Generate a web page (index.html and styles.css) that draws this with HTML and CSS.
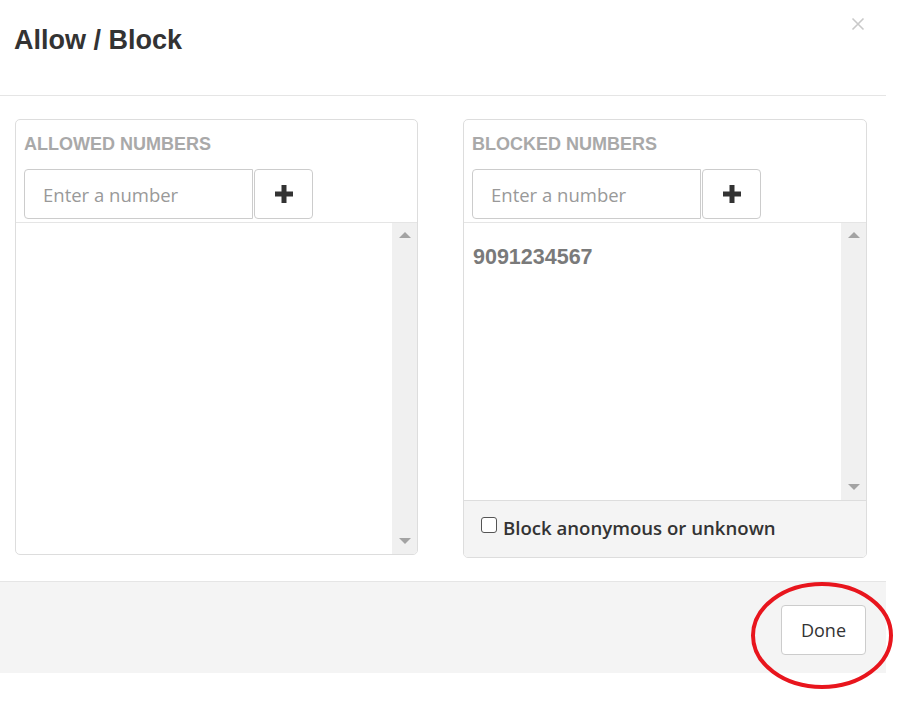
FILE: index.html
```html
<!DOCTYPE html>
<html>
<head>
<meta charset="utf-8">
<link rel="stylesheet" href="styles.css">
</head>
<body>
<div class="modal">
  <div class="modal-header">
    <h1 class="title">Allow / Block</h1>
    <button class="close" aria-label="Close">
      <svg width="14" height="14" viewBox="0 0 14 14"><path d="M1.5 1.5 L12.5 12.5 M12.5 1.5 L1.5 12.5" stroke="#c9c9c9" stroke-width="1.6" fill="none"/></svg>
    </button>
  </div>
  <div class="modal-body">
    <div class="panel panel-allow">
      <h2 class="panel-title">ALLOWED NUMBERS</h2>
      <div class="input-group">
        <input class="num-input" type="text" placeholder="Enter a number">
        <button class="add-btn"><svg width="18" height="18" viewBox="0 0 18 18"><path d="M6.5 0h5v6.5H18v5h-6.5V18h-5v-6.5H0v-5h6.5z" fill="#333"/></svg></button>
      </div>
      <div class="list list-allow">
        <div class="list-items"></div>
        <div class="scrollbar"><span class="arrow up"></span><span class="arrow down"></span></div>
      </div>
    </div>
    <div class="panel panel-block">
      <h2 class="panel-title">BLOCKED NUMBERS</h2>
      <div class="input-group">
        <input class="num-input" type="text" placeholder="Enter a number">
        <button class="add-btn"><svg width="18" height="18" viewBox="0 0 18 18"><path d="M6.5 0h5v6.5H18v5h-6.5V18h-5v-6.5H0v-5h6.5z" fill="#333"/></svg></button>
      </div>
      <div class="list list-block">
        <div class="list-items"><div class="item">9091234567</div></div>
        <div class="scrollbar"><span class="arrow up"></span><span class="arrow down"></span></div>
      </div>
      <label class="panel-footer"><span class="checkbox"></span>Block anonymous or unknown</label>
    </div>
  </div>
  <div class="modal-footer">
    <button class="done-btn">Done</button>
  </div>
</div>
<svg class="annotation" width="150" height="115" viewBox="0 0 150 115"><ellipse cx="75" cy="57.5" rx="69" ry="51.5" fill="none" stroke="#e8151d" stroke-width="4"/></svg>
</body>
</html>
```
FILE: styles.css
```css
* { box-sizing: border-box; }
html, body { margin: 0; padding: 0; background: #fff; }
body { width: 914px; height: 704px; position: relative; overflow: hidden; font-family: "Open Sans", sans-serif; color: #333; }

.modal { width: 886px; background: #fff; }

.modal-header {
  height: 96px;
  border-bottom: 1px solid #e5e5e5;
  display: flex;
  justify-content: space-between;
  align-items: flex-start;
  padding: 0 0 0 14px;
}
.title {
  margin: 25px 0 0 0;
  font-family: "Liberation Sans", Arial, sans-serif;
  font-weight: bold;
  font-size: 27px;
  line-height: 30px;
  color: #333;
}
.close {
  margin: 17px 21px 0 0;
  padding: 0;
  border: 0;
  background: none;
  width: 14px;
  height: 14px;
  display: flex;
}

.modal-body {
  display: grid;
  grid-template-columns: 403px 404px;
  column-gap: 45px;
  align-items: start;
  padding: 23px 20px 23px 15px;
}

.panel {
  border: 1px solid #ddd;
  border-radius: 5px;
  display: flex;
  flex-direction: column;
  overflow: hidden;
}
.panel-title {
  margin: 14px 0 0 8px;
  font-family: "Liberation Sans", Arial, sans-serif;
  font-weight: bold;
  font-size: 18px;
  line-height: 20px;
  color: #a9a9a9;
}
.input-group {
  display: flex;
  margin: 15px 0 0 8px;
  height: 50px;
}
.num-input {
  width: 229px;
  height: 50px;
  border: 1px solid #ccc;
  border-radius: 4px 0 0 4px;
  padding: 0 0 0 18px;
  font-family: "Open Sans", sans-serif;
  font-size: 18.5px;
  color: #555;
  outline: none;
  margin: 0;
}
.num-input::placeholder { color: #999; }
.add-btn {
  width: 59px;
  height: 50px;
  margin: 0 0 0 1px;
  border: 1px solid #ccc;
  border-radius: 4px;
  background: #fff;
  display: flex;
  align-items: center;
  justify-content: center;
  padding: 0;
}

.list {
  margin-top: 3px;
  border-top: 1px solid #e5e5e5;
  display: flex;
}
.list-allow { height: 332px; }
.list-block { height: 278px; }
.list-items { flex: 1; padding: 20px 9px; }
.item {
  font-family: "Liberation Sans", Arial, sans-serif;
  font-weight: bold;
  font-size: 21.5px;
  line-height: 28px;
  color: #7a7a7a;
}
.scrollbar {
  width: 25px;
  background: #f0f0f0;
  display: flex;
  flex-direction: column;
  justify-content: space-between;
  align-items: center;
  padding: 9px 0 10px;
}
.arrow {
  width: 0; height: 0;
  border-left: 6px solid transparent;
  border-right: 6px solid transparent;
}
.arrow.up { border-bottom: 6px solid #a3a3a3; }
.arrow.down { border-top: 6px solid #a3a3a3; }

.panel-footer {
  border-top: 1px solid #ddd;
  background: #f4f4f4;
  height: 57px;
  display: flex;
  align-items: center;
  padding: 0 0 3px 17px;
  font-family: "Open Sans", sans-serif;
  font-weight: 600;
  font-size: 18.6px;
  color: #333;
}
.checkbox {
  width: 16px;
  height: 16px;
  border: 1.5px solid #555;
  border-radius: 3px;
  background: #fff;
  margin: -6px 6px 0 0;
}

.modal-footer {
  border-top: 1px solid #e5e5e5;
  background: #f4f4f4;
  height: 92px;
  display: flex;
  justify-content: flex-end;
  align-items: flex-start;
  padding: 23px 20px 0 0;
}
.done-btn {
  width: 85px;
  height: 50px;
  border: 1px solid #ccc;
  border-radius: 4px;
  background: #fff;
  font-family: "Open Sans", sans-serif;
  font-size: 18px;
  color: #333;
  padding: 0;
}

.annotation {
  position: absolute;
  left: 747px;
  top: 578px;
}
```
